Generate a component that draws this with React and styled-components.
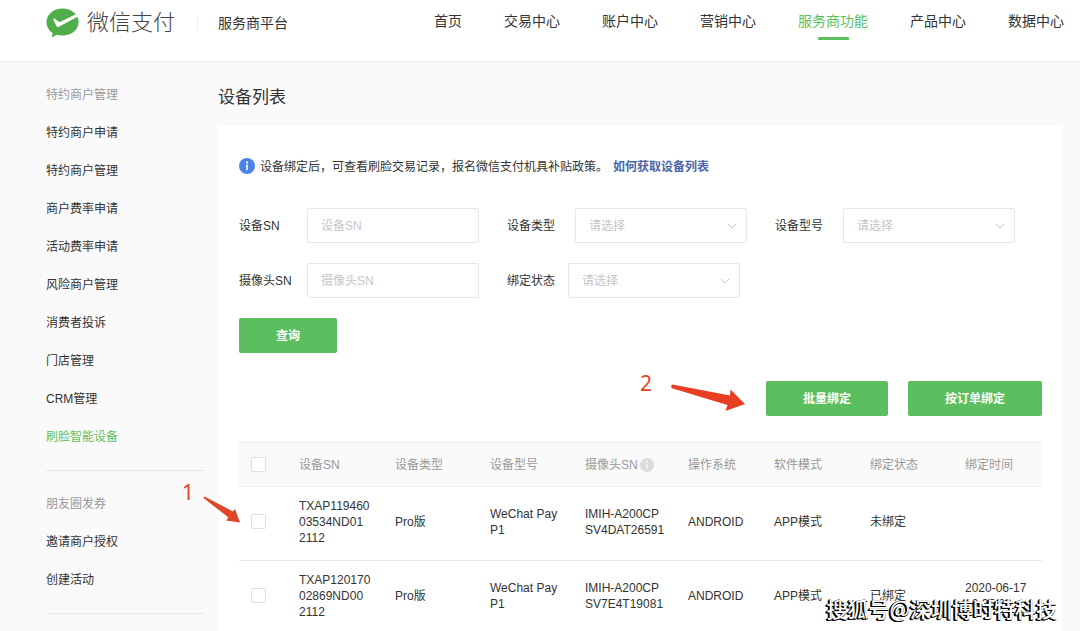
import React from "react";
import styled, { createGlobalStyle, css } from "styled-components";

const navItems = ["首页", "交易中心", "账户中心", "营销中心", "服务商功能", "产品中心", "数据中心"];

const merchantMenu = [
  "特约商户申请",
  "特约商户管理",
  "商户费率申请",
  "活动费率申请",
  "风险商户管理",
  "消费者投诉",
  "门店管理",
  "CRM管理",
  "刷脸智能设备",
];

const couponMenu = ["邀请商户授权", "创建活动"];

const devices = [
  {
    sn: "TXAP119460\n03534ND01\n2112",
    type: "Pro版",
    model: "WeChat Pay\nP1",
    camera: "IMIH-A200CP\nSV4DAT26591",
    os: "ANDROID",
    mode: "APP模式",
    status: "未绑定",
    time: "",
  },
  {
    sn: "TXAP120170\n02869ND00\n2112",
    type: "Pro版",
    model: "WeChat Pay\nP1",
    camera: "IMIH-A200CP\nSV7E4T19081",
    os: "ANDROID",
    mode: "APP模式",
    status: "已绑定",
    time: "2020-06-17\n10:35:20",
  },
];

function MenuGroup({ title, items, active }) {
  return (
    <Group>
      <GroupTitle>{title}</GroupTitle>
      <MenuList>
        {items.map((item) => (
          <li key={item}>
            <MenuLink href="#" $active={item === active}>
              {item}
            </MenuLink>
          </li>
        ))}
      </MenuList>
    </Group>
  );
}

function TextField({ id, label }) {
  return (
    <Field>
      <FieldLabel htmlFor={id}>{label}</FieldLabel>
      <TextInput id={id} placeholder={label} />
    </Field>
  );
}

function SelectField({ id, label, narrow }) {
  return (
    <Field>
      <FieldLabel htmlFor={id} $narrow={narrow}>
        {label}
      </FieldLabel>
      <SelectWrap>
        <SelectInput id={id} defaultValue="">
          <option value="">请选择</option>
        </SelectInput>
        <Chevron viewBox="0 0 10 6" aria-hidden="true">
          <path d="M1 1l4 4 4-4" fill="none" stroke="#c4c6cc" />
        </Chevron>
      </SelectWrap>
    </Field>
  );
}

function InfoIcon({ size, color, mark }) {
  return (
    <svg width={size} height={size} viewBox="0 0 16 16" aria-hidden="true">
      <circle cx="8" cy="8" r="8" fill={color} />
      <circle cx="8" cy="4.4" r="1.1" fill={mark} />
      <path d="M8 6.600V12.200" fill="none" stroke={mark} strokeWidth="1.6" />
    </svg>
  );
}

function App() {
  return (
    <Page>
      <GlobalStyle />
      <Header>
        <Brand>
          <svg width="33" height="30" viewBox="0 0 33 30" aria-hidden="true">
            <path
              d="M16.500 0.500C7.500 0.500 0.500 6.400 0.500 14c0 4.600 2.400 8.600 6.100 11L5.700 29.500l5-2.700c1.800.5 3.700.8 5.800.8 9 0 16.100-6 16.100-13.600 0-7.600-7.100-13.500-16.100-13.500z"
              fill="#4fae4a"
            />
            <path
              d="M7.600 10.900c.4-.5 1-.3 1.500.1l3.300 2.500c.7.500 1.300.5 2.100.2L30.200 5.900 32 8.600 12.900 18.800c-1.200.7-2 .4-2.500-.7L7.600 12.200c-.2-.5-.3-.9 0-1.300z"
              fill="#fff"
            />
          </svg>
          <BrandName>微信支付</BrandName>
        </Brand>
        <Platform>服务商平台</Platform>
        <Nav>
          {navItems.map((item) => (
            <NavLink key={item} href="#" $active={item === "服务商功能"}>
              {item}
            </NavLink>
          ))}
        </Nav>
      </Header>

      <Body>
        <Sidebar>
          <MenuGroup title="特约商户管理" items={merchantMenu} active="刷脸智能设备" />
          <MenuGroup title="朋友圈发券" items={couponMenu} />
        </Sidebar>

        <Main>
          <Title>设备列表</Title>
          <Card>
            <Notice>
              <InfoIcon size={16} color="#4a83e8" mark="#fff" />
              <NoticeText>设备绑定后，可查看刷脸交易记录，报名微信支付机具补贴政策。</NoticeText>
              <NoticeLink href="#">如何获取设备列表</NoticeLink>
            </Notice>

            <Filters>
              <FilterRow>
                <TextField id="device-sn" label="设备SN" />
                <SelectField id="device-type" label="设备类型" />
                <SelectField id="device-model" label="设备型号" />
              </FilterRow>
              <FilterRow>
                <TextField id="camera-sn" label="摄像头SN" />
                <SelectField id="bind-status" label="绑定状态" narrow />
              </FilterRow>
              <FilterRow>
                <Button $width="98px">查询</Button>
              </FilterRow>
            </Filters>

            <Actions>
              <Button $width="122px">批量绑定</Button>
              <Button $width="134px">按订单绑定</Button>
            </Actions>

            <Table>
              <colgroup>
                <Col $width="48px" />
                <Col $width="96px" />
                <Col $width="95px" />
                <Col $width="95px" />
                <Col $width="103px" />
                <Col $width="86px" />
                <Col $width="96px" />
                <Col $width="95px" />
                <Col />
              </colgroup>
              <thead>
                <tr>
                  <Th>
                    <CheckBox aria-label="全选" />
                  </Th>
                  <Th>设备SN</Th>
                  <Th>设备类型</Th>
                  <Th>设备型号</Th>
                  <Th>
                    <ThWithIcon>
                      摄像头SN
                      <InfoIcon size={14} color="#dcdcdc" mark="#f8f8f8" />
                    </ThWithIcon>
                  </Th>
                  <Th>操作系统</Th>
                  <Th>软件模式</Th>
                  <Th>绑定状态</Th>
                  <Th>绑定时间</Th>
                </tr>
              </thead>
              <tbody>
                {devices.map((device) => (
                  <tr key={device.camera}>
                    <Td>
                      <CheckBox aria-label={device.camera} />
                    </Td>
                    <Td>{device.sn}</Td>
                    <Td>{device.type}</Td>
                    <Td>{device.model}</Td>
                    <Td>{device.camera}</Td>
                    <Td>{device.os}</Td>
                    <Td>{device.mode}</Td>
                    <Td>{device.status}</Td>
                    <Td>{device.time}</Td>
                  </tr>
                ))}
              </tbody>
            </Table>
          </Card>
        </Main>
      </Body>

      {/* numbered steps drawn over the page */}
      <StepOne>
        <span>1</span>
        <svg width="38" height="28" viewBox="0 0 38 28" aria-hidden="true">
          <path d="M1.500 0.500L30 15.500 32 13 37 26.500 23 24.500 25.500 21.500 0.500 2z" fill="#e04527" />
        </svg>
      </StepOne>
      <StepTwo>
        <span>2</span>
        <svg width="76" height="28" viewBox="0 0 76 28" aria-hidden="true">
          <path d="M2.500 0.500L60 11.500 60.500 5.500 75 20 55.500 27 57.500 21 2 4.200Q0 2 2.500 .5z" fill="#e63f22" />
        </svg>
      </StepTwo>
      <Watermark>搜狐号@深圳博时特科技</Watermark>
    </Page>
  );
}

const GlobalStyle = createGlobalStyle`
  * {
    box-sizing: border-box;
  }

  body {
    margin: 0;
    background: #fafafa;
    color: #333;
    font-family: "Liberation Sans", "Noto Sans CJK SC", sans-serif;
    font-size: 12px;
    line-height: 16px;
  }

  a {
    color: inherit;
    text-decoration: none;
  }

  button, input, select {
    font: inherit;
  }
`;

const Page = styled.div`
  position: relative;
  height: 100vh;
  overflow: hidden;
`;

const Header = styled.header`
  display: flex;
  align-items: flex-start;
  height: 62px;
  padding: 0 16px 0 46px;
  background: #fff;
  border-bottom: 1px solid #f0f0f0;
`;

const Brand = styled.div`
  display: flex;
  align-items: center;
  gap: 8px;
  height: 46px;
`;

const BrandName = styled.span`
  color: #444;
  font-size: 22px;
  font-weight: 300;
  line-height: 32px;
`;

const Platform = styled.div`
  margin: 16px 0 0 22px;
  padding-left: 20px;
  border-left: 1px solid #eee;
  font-size: 14px;
  line-height: 14px;
`;

const Nav = styled.nav`
  display: flex;
  gap: 42px;
  margin-left: auto;
`;

const NavLink = styled.a`
  display: flex;
  flex-direction: column;
  align-items: center;
  padding-top: 11px;
  font-size: 14px;
  line-height: 20px;
  white-space: nowrap;

  ${(props) =>
    props.$active &&
    css`
      color: #5bbf60;

      &::after {
        content: "";
        width: 31px;
        height: 3px;
        margin-top: 6px;
        border-radius: 1px;
        background: #5bbf60;
      }
    `}
`;

const Body = styled.div`
  display: flex;
  gap: 14px;
  padding: 0 18px 0 46px;
`;

const Sidebar = styled.aside`
  width: 158px;
  flex-shrink: 0;
  padding-top: 14px;
`;

const Group = styled.section`
  margin-bottom: 14px;
  padding-bottom: 14px;
  border-bottom: 1px solid #e6e6e6;
`;

const GroupTitle = styled.h2`
  margin: 0;
  color: #999;
  font-size: 12px;
  font-weight: 400;
  line-height: 38px;
`;

const MenuList = styled.ul`
  margin: 0;
  padding: 0;
  list-style: none;
`;

const MenuLink = styled.a`
  display: block;
  line-height: 38px;
  color: ${(props) => (props.$active ? "#5bbf60" : "#333")};
`;

const Main = styled.main`
  flex: 1;
  min-width: 0;
`;

const Title = styled.h1`
  margin: 23px 0 15px;
  font-size: 17px;
  font-weight: 400;
  line-height: 26px;
`;

const Card = styled.div`
  padding: 31px 20px 40px 21px;
  background: #fff;
`;

const Notice = styled.div`
  display: flex;
  align-items: center;
  gap: 5px;
`;

const NoticeText = styled.span`
  padding-top: 2px;
`;

const NoticeLink = styled.a`
  padding-top: 2px;
  color: #4a66a8;
  font-weight: 600;
`;

const Filters = styled.form`
  display: flex;
  flex-direction: column;
  gap: 20px;
  margin: 33px 0 28px;
`;

const FilterRow = styled.div`
  display: flex;
  gap: 28px;
`;

const Field = styled.div`
  display: flex;
  align-items: center;
`;

const FieldLabel = styled.label`
  width: ${(props) => (props.$narrow ? "61px" : "68px")};
  white-space: nowrap;
`;

const control = css`
  width: 172px;
  height: 35px;
  padding: 0 13px;
  border: 1px solid #e7e7eb;
  border-radius: 2px;
  background: #fff;
  outline: none;
`;

const TextInput = styled.input`
  ${control}

  &::placeholder {
    color: #c4c6cc;
  }
`;

const SelectWrap = styled.div`
  position: relative;
`;

const SelectInput = styled.select`
  ${control}
  appearance: none;
  color: #c4c6cc;
`;

const Chevron = styled.svg`
  position: absolute;
  top: 15px;
  right: 10px;
  width: 10px;
  height: 6px;
  pointer-events: none;
`;

const Button = styled.button.attrs({ type: "button" })`
  width: ${(props) => props.$width};
  height: 35px;
  border: 0;
  border-radius: 2px;
  background: #5bbf60;
  color: #fff;
  font-weight: 600;
`;

const Actions = styled.div`
  display: flex;
  justify-content: flex-end;
  gap: 20px;
  margin-bottom: 26px;
`;

const Table = styled.table`
  width: 100%;
  table-layout: fixed;
  border-collapse: collapse;
`;

const Col = styled.col`
  width: ${(props) => props.$width};
`;

const Th = styled.th`
  height: 44px;
  padding: 0 0 0 12px;
  border-top: 1px solid #eee;
  border-bottom: 1px solid #eee;
  background: #fafafa;
  color: #999;
  font-weight: 400;
  text-align: left;
  vertical-align: middle;
  white-space: nowrap;
`;

const ThWithIcon = styled.span`
  display: flex;
  align-items: center;
  gap: 2px;
`;

const Td = styled.td`
  height: 74px;
  padding: 0 0 4px 12px;
  border-bottom: 1px solid #e8e8e8;
  white-space: pre;
  vertical-align: middle;
`;

const CheckBox = styled.input.attrs({ type: "checkbox" })`
  appearance: none;
  display: block;
  width: 15px;
  height: 15px;
  margin: 0;
  border: 1px solid #dfdfe3;
  border-radius: 2px;
  background: #fff;
`;

const Step = styled.div`
  position: absolute;
  display: flex;
  color: #e04527;
  font-family: "Noto Sans", sans-serif;
  font-size: 21px;
  line-height: 24px;
`;

const StepOne = styled(Step)`
  top: 480px;
  left: 182px;
  gap: 9px;

  svg {
    margin-top: 16px;
  }
`;

const StepTwo = styled(Step)`
  top: 371px;
  left: 640px;
  gap: 18px;

  svg {
    margin-top: 13px;
  }
`;

const Watermark = styled.div`
  position: absolute;
  right: 23px;
  bottom: 9px;
  color: #fff;
  font-family: "Noto Sans CJK SC", sans-serif;
  font-size: 21px;
  font-weight: 500;
  line-height: 28px;
  text-shadow: -1px 1px 0 #000, -1px 0 0 #000, 0 1px 0 #000, -2px 1px 0 #000;
`;

export default App;
